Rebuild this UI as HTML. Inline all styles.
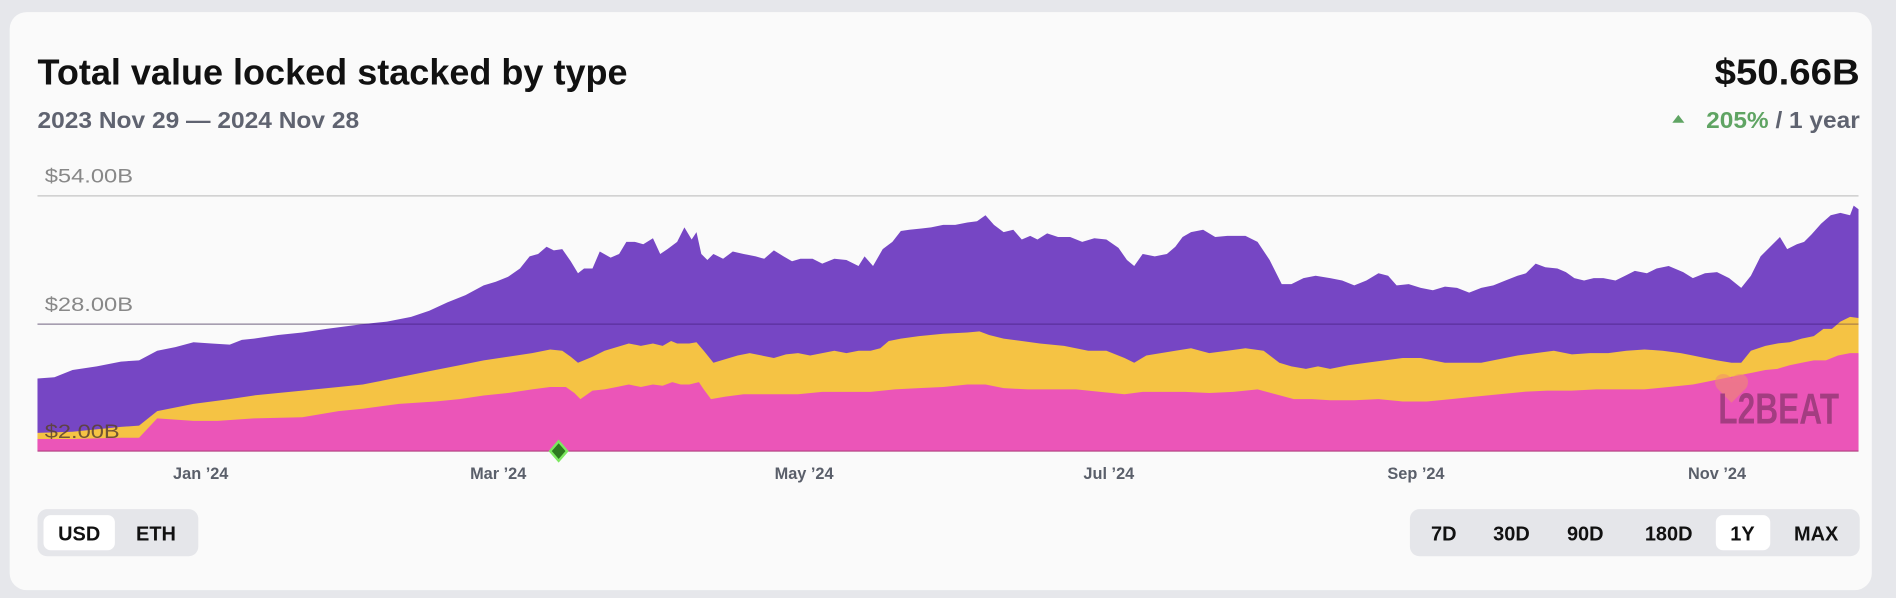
<!DOCTYPE html>
<html><head><meta charset="utf-8"><style>
html,body{margin:0;padding:0;background:#e6e7eb;}
svg{display:block;}
text{font-family:"Liberation Sans",sans-serif;}
</style></head><body>
<svg width="1896" height="598" viewBox="0 0 1568 494.5" preserveAspectRatio="none" xmlns="http://www.w3.org/2000/svg">
<rect x="0" y="0" width="1568" height="494.5" fill="#e6e7eb"/>
<rect x="8" y="10" width="1540" height="478" rx="14" fill="#fafafa"/>

<text x="31" y="70" font-size="30" font-weight="700" fill="#111" textLength="488" lengthAdjust="spacingAndGlyphs">Total value locked stacked by type</text>
<text x="31" y="106" font-size="19" font-weight="700" fill="#5f6370" textLength="266" lengthAdjust="spacingAndGlyphs">2023 Nov 29 — 2024 Nov 28</text>
<text x="1538" y="70" font-size="30" font-weight="700" fill="#111" text-anchor="end" textLength="120" lengthAdjust="spacingAndGlyphs">$50.66B</text>
<polygon points="1383,101.5 1393,101.5 1388,95" fill="#5fa463"/>
<text x="1411" y="106" font-size="19" font-weight="700" fill="#5fa463" textLength="127" lengthAdjust="spacingAndGlyphs">205%<tspan fill="#5f6370"> / 1 year</tspan></text>

<text x="37" y="151" font-size="16" fill="#888" textLength="73" lengthAdjust="spacingAndGlyphs">$54.00B</text>
<text x="37" y="257" font-size="16" fill="#888" textLength="73" lengthAdjust="spacingAndGlyphs">$28.00B</text>
<line x1="31" y1="162" x2="1537" y2="162" stroke="#c4c4c4" stroke-width="1"/>
<line x1="31" y1="268" x2="1537" y2="268" stroke="#c4c4c4" stroke-width="1"/>

<polygon fill="#7646c4" points="31,313 45,312 60,306 80,303 100,299 115,298 130,290 145,287 160,283 175,284 190,285 200,281 210,280 230,277 250,275 270,272 300,268 320,266 340,262 355,257 370,250 385,244 400,236 410,233 420,229 430,222 438,212 445,210 452,204 458,207 465,206 472,216 478,226 483,222 490,222 496,208 505,213 512,210 518,200 525,200 532,202 540,197 546,210 552,206 560,200 566,188 572,198 576,192 580,210 585,215 590,210 598,214 606,208 615,210 625,212 632,214 640,207 648,212 655,216 662,214 672,214 680,218 690,214 700,215 710,220 715,212 722,220 730,206 738,200 745,191 752,190 762,189 770,188 780,186 790,186 800,184 808,183 815,178 822,186 830,192 838,190 845,198 852,195 858,198 866,193 875,196 885,196 895,200 905,197 915,198 925,205 932,215 938,220 945,210 955,212 965,210 972,204 978,196 985,192 995,190 1005,196 1015,195 1030,195 1040,200 1050,215 1060,235 1068,235 1078,230 1088,228 1100,230 1110,232 1120,236 1130,232 1140,226 1148,228 1155,236 1165,235 1175,238 1185,240 1195,237 1205,238 1215,242 1225,238 1235,236 1245,232 1255,228 1262,226 1270,218 1278,221 1288,222 1295,225 1302,230 1310,232 1318,230 1326,230 1336,232 1344,228 1352,224 1362,226 1370,222 1380,220 1392,225 1400,230 1410,226 1420,225 1430,230 1440,238 1448,228 1456,212 1465,203 1472,196 1478,206 1486,202 1492,200 1498,194 1506,185 1514,178 1522,176 1530,178 1533,170 1537,173 1537,373 31,373"/>
<polygon fill="#f5c344" points="31,358 60,357 100,353 115,352 130,340 160,334 190,330 210,327 250,323 280,320 300,318 330,312 360,306 380,302 400,298 420,295 440,292 455,289 465,290 472,295 478,300 490,295 500,290 510,287 520,284 530,286 540,284 548,286 555,282 560,284 570,284 576,283 582,290 590,300 600,297 610,294 620,292 630,294 640,296 650,293 660,292 670,294 680,292 690,290 700,292 710,290 720,290 728,288 735,282 745,280 760,278 780,276 800,275 810,274 818,277 830,280 845,282 860,284 880,286 900,290 915,290 930,296 938,300 948,294 960,292 972,290 985,288 1000,292 1015,290 1030,288 1045,290 1058,300 1068,303 1080,305 1090,303 1100,305 1115,302 1130,300 1145,298 1160,296 1175,296 1185,298 1195,300 1210,300 1225,300 1240,297 1255,294 1270,292 1285,290 1300,293 1315,292 1330,292 1345,290 1360,289 1375,290 1390,292 1400,294 1410,296 1420,298 1432,300 1440,300 1448,290 1460,286 1470,284 1480,283 1490,280 1500,278 1508,272 1515,272 1522,266 1530,262 1537,263 1537,373 31,373"/>
<polygon fill="#eb55b8" points="31,363 60,363 100,362 115,362 130,346 160,348 180,348 210,346 250,345 280,340 300,338 330,334 360,332 380,330 400,327 420,325 440,322 455,320 468,320 475,325 480,330 490,323 500,322 510,320 520,318 530,320 540,318 548,319 556,316 563,318 570,318 578,316 582,322 588,330 600,328 615,326 630,326 645,326 660,326 680,324 700,324 720,324 740,322 760,321 780,320 800,318 815,318 830,321 850,322 870,322 890,322 910,324 930,326 945,324 960,324 980,324 1000,325 1020,324 1040,322 1055,326 1070,330 1085,330 1100,331 1120,331 1140,330 1160,332 1180,332 1200,330 1220,328 1240,326 1260,324 1280,323 1300,323 1320,322 1340,322 1360,322 1380,320 1400,318 1415,315 1430,312 1440,310 1450,308 1460,306 1470,305 1480,302 1490,300 1500,298 1510,298 1520,294 1530,292 1537,292 1537,373 31,373"/>
<line x1="31" y1="268" x2="1537" y2="268" stroke="rgba(40,10,80,0.35)" stroke-width="1"/>
<line x1="31" y1="373" x2="1537" y2="373" stroke="#b0407f" stroke-width="1"/>

<text x="37" y="362" font-size="16" fill="#5a4230" fill-opacity="0.85" textLength="62" lengthAdjust="spacingAndGlyphs">$2.00B</text>

<!-- L2BEAT watermark -->
<g opacity="0.55">
<path d="M1432,313 c-6,-8 -18,-2 -12,8 l12,12 l12,-12 c6,-10 -6,-16 -12,-8z" fill="#f0906a"/>
<text x="1421" y="350" font-size="36" font-weight="700" fill="#6a2a55" textLength="100" lengthAdjust="spacingAndGlyphs">L2BEAT</text>
</g>

<polygon points="462,365 469,373 462,381 455,373" fill="#2e7a1f" stroke="#7ce860" stroke-width="2"/>

<g font-size="13.5" font-weight="700" fill="#5a5f6a" text-anchor="middle">
<text x="166" y="396">Jan ’24</text>
<text x="412" y="396">Mar ’24</text>
<text x="665" y="396">May ’24</text>
<text x="917" y="396">Jul ’24</text>
<text x="1171" y="396">Sep ’24</text>
<text x="1420" y="396">Nov ’24</text>
</g>

<rect x="31" y="421" width="133" height="39" rx="8" fill="#e5e6ea"/>
<rect x="36" y="426" width="59" height="29" rx="6" fill="#fff"/>
<g font-size="16.5" font-weight="700" fill="#111" text-anchor="middle">
<text x="65.5" y="447">USD</text>
<text x="129" y="447">ETH</text>
</g>

<rect x="1166" y="421" width="372" height="39" rx="8" fill="#e5e6ea"/>
<rect x="1419" y="426" width="45" height="29" rx="6" fill="#fff"/>
<g font-size="16.5" font-weight="700" fill="#111" text-anchor="middle">
<text x="1194" y="447">7D</text>
<text x="1250" y="447">30D</text>
<text x="1311" y="447">90D</text>
<text x="1380" y="447">180D</text>
<text x="1441" y="447">1Y</text>
<text x="1502" y="447">MAX</text>
</g>
</svg>
</body></html>
